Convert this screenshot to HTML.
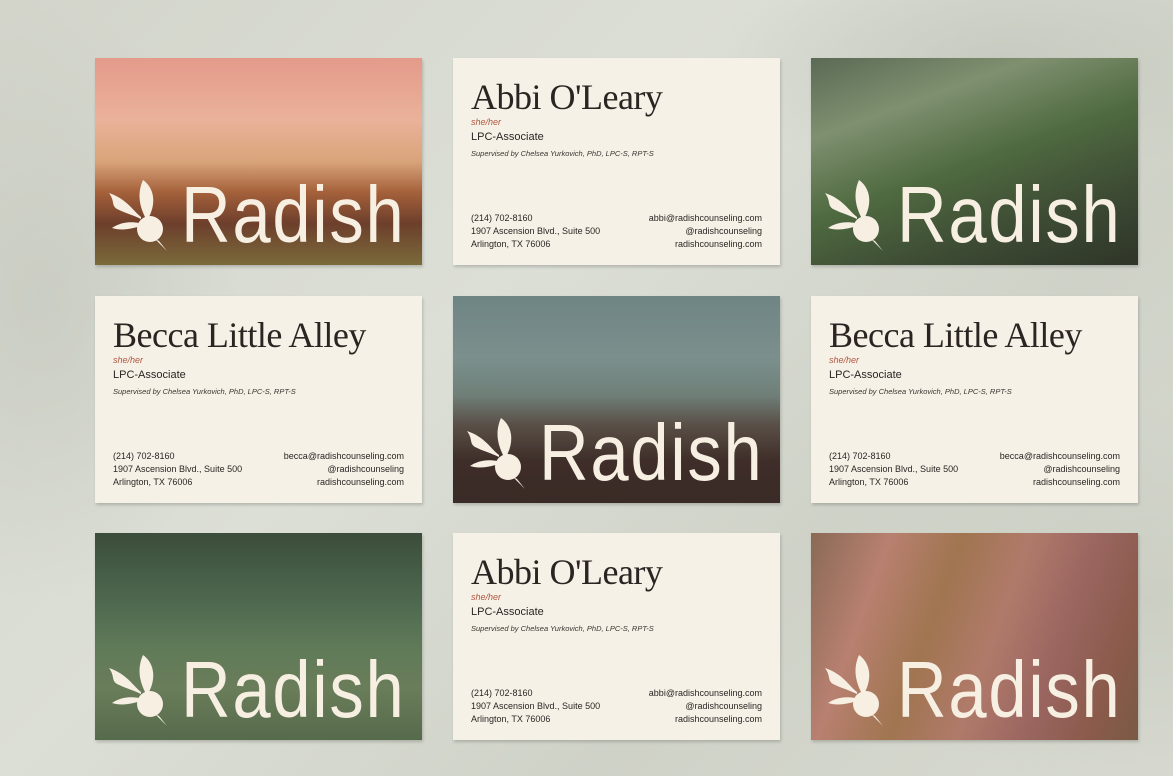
<!DOCTYPE html>
<html><head><meta charset="utf-8"><style>
*{margin:0;padding:0;box-sizing:border-box}
body{width:1173px;height:776px;overflow:hidden;position:relative;
background:linear-gradient(135deg,#d3d5cb 0%,#dcdfd6 40%,#cfd2c7 70%,#d8dad1 100%);
font-family:"Liberation Sans",sans-serif}
.sh{position:absolute;inset:0;background:
radial-gradient(ellipse 300px 120px at 1000px 60px,rgba(190,193,182,.6),transparent),
radial-gradient(ellipse 200px 300px at 40px 300px,rgba(190,193,182,.5),transparent),
radial-gradient(ellipse 300px 200px at 1150px 600px,rgba(195,198,186,.5),transparent)}
.card{position:absolute;width:327px;height:207px;overflow:hidden;box-shadow:1px 2px 3px rgba(0,0,0,.18)}
.c1{left:95px}.c2{left:453px}.c3{left:811px}
.r1{top:58px}.r2{top:296px}.r3{top:533px}
.txt{background:#f6f1e6;color:#2a2523}
.name{position:absolute;left:18px;top:18px;font-family:"Liberation Serif",serif;font-size:36px;color:#2b2422;letter-spacing:-.5px}
.pro{position:absolute;left:18px;top:59px;font-size:9px;font-style:italic;color:#b0553f}
.lpc{position:absolute;left:18px;top:73px;font-size:11px;color:#2a2523}
.sup{position:absolute;left:18px;top:91px;font-size:7.5px;font-style:italic;color:#3a3431}
.ad{position:absolute;left:18px;top:154px;font-size:9px;line-height:13px;color:#2a2523}
.ct{position:absolute;right:18px;top:154px;font-size:9px;line-height:13px;text-align:right;color:#2a2523}
.logo{position:absolute;left:0;top:115px;width:327px;height:92px}
.logo svg{position:absolute;left:12px;top:6px}
.logo span{position:absolute;left:86px;top:-4px;font-size:80px;line-height:92px;color:#f6efe2;letter-spacing:2px;transform:scaleX(.86);transform-origin:left}
</style></head><body><div class="sh"></div>

<div class="card c1 r1" style="background:linear-gradient(180deg,#e49a8a 0%,#eab29a 30%,#d9a47a 50%,#a4603a 65%,#6d3f2c 80%,#7a6a3a 100%)"><div class="logo"><svg width="64" height="76" viewBox="0 0 64 76"><g fill="#f6efe2"><circle cx="43" cy="50" r="13"/><path d="M48 60 L60 72 L52 62Z"/><path d="M38 38 C30 22 32 10 36 1 C46 8 50 22 42 38Z"/><path d="M34 38 C26 32 20 20 2 14 C8 22 4 26 10 30 C18 34 26 36 34 40Z"/><path d="M32 44 C22 42 12 44 5 49 C14 52 24 50 34 47Z"/></g></svg><span>Radish</span></div></div>

<div class="card c2 r1 txt"><div class="name">Abbi O'Leary</div><div class="pro">she/her</div><div class="lpc">LPC-Associate</div><div class="sup">Supervised by Chelsea Yurkovich, PhD, LPC-S, RPT-S</div><div class="ad">(214) 702-8160<br>1907 Ascension Blvd., Suite 500<br>Arlington, TX 76006</div><div class="ct">abbi@radishcounseling.com<br>@radishcounseling<br>radishcounseling.com</div></div>

<div class="card c3 r1" style="background:linear-gradient(160deg,#5b6a55 0%,#7f9070 25%,#4f6a40 50%,#3d4b34 75%,#2f3528 100%)"><div class="logo"><svg width="64" height="76" viewBox="0 0 64 76"><g fill="#f6efe2"><circle cx="43" cy="50" r="13"/><path d="M48 60 L60 72 L52 62Z"/><path d="M38 38 C30 22 32 10 36 1 C46 8 50 22 42 38Z"/><path d="M34 38 C26 32 20 20 2 14 C8 22 4 26 10 30 C18 34 26 36 34 40Z"/><path d="M32 44 C22 42 12 44 5 49 C14 52 24 50 34 47Z"/></g></svg><span>Radish</span></div></div>

<div class="card c1 r2 txt"><div class="name">Becca Little Alley</div><div class="pro">she/her</div><div class="lpc">LPC-Associate</div><div class="sup">Supervised by Chelsea Yurkovich, PhD, LPC-S, RPT-S</div><div class="ad">(214) 702-8160<br>1907 Ascension Blvd., Suite 500<br>Arlington, TX 76006</div><div class="ct">becca@radishcounseling.com<br>@radishcounseling<br>radishcounseling.com</div></div>

<div class="card c2 r2" style="background:linear-gradient(180deg,#6f8584 0%,#7b908d 30%,#6f7f78 48%,#5a5048 62%,#3e2d28 80%,#3a2b26 100%)"><div class="logo"><svg width="64" height="76" viewBox="0 0 64 76"><g fill="#f6efe2"><circle cx="43" cy="50" r="13"/><path d="M48 60 L60 72 L52 62Z"/><path d="M38 38 C30 22 32 10 36 1 C46 8 50 22 42 38Z"/><path d="M34 38 C26 32 20 20 2 14 C8 22 4 26 10 30 C18 34 26 36 34 40Z"/><path d="M32 44 C22 42 12 44 5 49 C14 52 24 50 34 47Z"/></g></svg><span>Radish</span></div></div>

<div class="card c3 r2 txt"><div class="name">Becca Little Alley</div><div class="pro">she/her</div><div class="lpc">LPC-Associate</div><div class="sup">Supervised by Chelsea Yurkovich, PhD, LPC-S, RPT-S</div><div class="ad">(214) 702-8160<br>1907 Ascension Blvd., Suite 500<br>Arlington, TX 76006</div><div class="ct">becca@radishcounseling.com<br>@radishcounseling<br>radishcounseling.com</div></div>

<div class="card c1 r3" style="background:linear-gradient(180deg,#3b4d3a 0%,#4f6a50 35%,#5f7a58 55%,#6a7d5a 75%,#566b4c 100%)"><div class="logo"><svg width="64" height="76" viewBox="0 0 64 76"><g fill="#f6efe2"><circle cx="43" cy="50" r="13"/><path d="M48 60 L60 72 L52 62Z"/><path d="M38 38 C30 22 32 10 36 1 C46 8 50 22 42 38Z"/><path d="M34 38 C26 32 20 20 2 14 C8 22 4 26 10 30 C18 34 26 36 34 40Z"/><path d="M32 44 C22 42 12 44 5 49 C14 52 24 50 34 47Z"/></g></svg><span>Radish</span></div></div>

<div class="card c2 r3 txt"><div class="name">Abbi O'Leary</div><div class="pro">she/her</div><div class="lpc">LPC-Associate</div><div class="sup">Supervised by Chelsea Yurkovich, PhD, LPC-S, RPT-S</div><div class="ad">(214) 702-8160<br>1907 Ascension Blvd., Suite 500<br>Arlington, TX 76006</div><div class="ct">abbi@radishcounseling.com<br>@radishcounseling<br>radishcounseling.com</div></div>

<div class="card c3 r3" style="background:linear-gradient(110deg,#8a6a55 0%,#b88070 20%,#a07550 38%,#b07a6a 55%,#9a6560 72%,#8a5a4a 88%,#7a5a45 100%)"><div class="logo"><svg width="64" height="76" viewBox="0 0 64 76"><g fill="#f6efe2"><circle cx="43" cy="50" r="13"/><path d="M48 60 L60 72 L52 62Z"/><path d="M38 38 C30 22 32 10 36 1 C46 8 50 22 42 38Z"/><path d="M34 38 C26 32 20 20 2 14 C8 22 4 26 10 30 C18 34 26 36 34 40Z"/><path d="M32 44 C22 42 12 44 5 49 C14 52 24 50 34 47Z"/></g></svg><span>Radish</span></div></div>

</body></html>
